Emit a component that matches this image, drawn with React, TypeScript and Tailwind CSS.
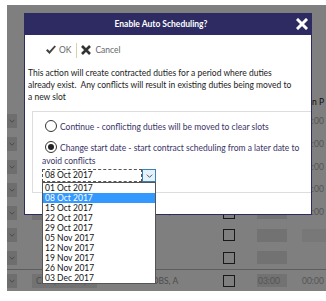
import React from 'react';

const dates = [
  '01 Oct 2017',
  '08 Oct 2017',
  '15 Oct 2017',
  '22 Oct 2017',
  '29 Oct 2017',
  '05 Nov 2017',
  '12 Nov 2017',
  '19 Nov 2017',
  '26 Nov 2017',
  '03 Dec 2017',
];

type Row = { name?: string; who?: string; start?: string; end?: string; endBox?: boolean };

const rows: Row[] = [
  { start: '03:00', end: '00:00' },
  { start: '03:00', end: '00:00' },
  { start: '03:00', end: '00:00' },
  { start: '03:00', end: '00:00' },
  { name: 'CL4 (Bluaner)', who: 'JACOBS, A', start: '03:00', end: '00:00' },
  { endBox: true },
  {},
  { name: 'CL4 (Bluaner)', who: 'JACOBS, A', start: '03:00', end: '00:00' },
];

function Chevron({ className = '' }: { className?: string }) {
  return (
    <svg viewBox="0 0 10 6" className={className} fill="none" stroke="currentColor" strokeWidth="1.2">
      <path d="M1 1l4 4 4-4" />
    </svg>
  );
}

function BackgroundTable() {
  return (
    <div className="flex flex-col h-full bg-white text-[8.5px] text-[#444]">
      <div className="h-[105px] shrink-0 flex items-end justify-end pr-[2px] pb-[1px] text-[#222]">
        <span>Shift Begin P</span>
      </div>
      <div className="flex flex-col">
        {rows.map((r, i) => (
          <div
            key={i}
            className={`h-[22.8px] flex items-center ${i === 6 ? 'border-b border-[#bbb]' : ''}`}
          >
            <div className="w-[10px] h-[14px] bg-[#dcdcdc] flex items-center justify-center text-[#777]">
              <Chevron className="w-[6px] h-[4px]" />
            </div>
            <div className="ml-[15px] w-[65px] h-[14px]">
              {r.name && (
                <div className="h-full bg-[#e4e4e4] flex items-center pl-[4px] text-[#999] whitespace-nowrap overflow-hidden">
                  {r.name}
                </div>
              )}
            </div>
            <div className="ml-[40px] w-[70px] text-[#999] whitespace-nowrap">{r.who}</div>
            <div className="ml-[16px] w-[12px] h-[12px] border border-[#333] bg-white" />
            <div className="ml-[22px] w-[30px] h-[13px] bg-[#e4e4e4] flex items-center pl-[1px] text-[#aaa]">
              {r.start}
            </div>
            <div className="ml-[15px] flex-1 h-[13px] flex items-center text-[#aaa]">
              {r.endBox ? <div className="w-full h-full bg-[#f0f0f0]" /> : r.end}
            </div>
          </div>
        ))}
      </div>
    </div>
  );
}

function Radio({ checked }: { checked?: boolean }) {
  return (
    <span className="w-[12px] h-[12px] shrink-0 rounded-full border border-[#333] bg-white flex items-center justify-center">
      {checked && <span className="w-[6px] h-[6px] rounded-full bg-[#222]" />}
    </span>
  );
}

function Dialog() {
  return (
    <div className="w-[288px] h-[202px] bg-white border border-[#2d2b62] flex flex-col">
      <div className="h-[21px] shrink-0 bg-[#2d2b62] flex items-center relative">
        <div className="flex-1 text-center pr-[14px] text-white font-bold text-[8.5px]">Enable Auto Scheduling?</div>
        <svg viewBox="0 0 12 12" className="absolute right-[3px] top-[4px] w-[12px] h-[12px]" stroke="white" strokeWidth="3" strokeLinecap="square">
          <path d="M2 2l8 8M10 2l-8 8" />
        </svg>
      </div>

      <div className="flex items-center h-[16px] mt-[7px] ml-[20px] text-[8.5px] text-[#666]">
        <svg viewBox="0 0 12 10" className="w-[12px] h-[10px]">
          <path d="M1 5.5l3.5 3.5L11 1.5 9.5 0.5 4.5 6 2.5 4z" fill="#444" />
        </svg>
        <span className="ml-[2px]">OK</span>
        <span className="ml-[5px] w-px h-[15px] bg-[#d6d4a8]" />
        <svg viewBox="0 0 10 10" className="ml-[4px] w-[10px] h-[10px]" stroke="#333" strokeWidth="2.6">
          <path d="M1 1l8 8M9 1l-8 8" />
        </svg>
        <span className="ml-[4px]">Cancel</span>
      </div>

      <p className="mt-[9px] ml-[3px] w-[266px] text-[8.5px] leading-[12px] text-[#222]">
        This action will create contracted duties for a period where duties already exist.&nbsp; Any conflicts will result in existing duties being moved to a new slot
      </p>

      <div className="relative mt-[8px] ml-[7px] h-[82px] border-t border-l border-b border-[#ddd] text-[8.5px] text-[#3a3466]">
        <div className="flex items-center mt-[7px] ml-[12px]">
          <Radio />
          <span className="ml-[3px] mt-[2px]">Continue - conflicting duties will be moved to clear slots</span>
        </div>
        <div className="flex items-start mt-[7px] ml-[12px]">
          <Radio checked />
          <span className="ml-[3px] mt-[1px] leading-[12px]">Change start date - start contract scheduling from a later date to</span>
        </div>
        <div className="ml-[9px] leading-[12px] mt-[1px]">avoid conflicts</div>
        <div className="absolute left-[9px] top-[57px]">
          <div className="flex w-[114px] h-[13px] text-[#111]">
            <div className="flex-1 border border-dashed border-[#555] flex items-center pl-[2px]">08 Oct 2017</div>
            <div className="w-[14px] bg-[#e5f1fb] border border-[#3c7fb1] flex items-center justify-center text-[#333]">
              <Chevron className="w-[7px] h-[4px]" />
            </div>
          </div>
          <div className="w-[114px] border border-[#555] bg-white text-[#111] flex flex-col">
            {dates.map((d, i) => (
              <div
                key={d}
                className={`h-[10px] leading-[10px] pl-[2px] ${i === 1 ? 'bg-[#3399ff] text-white' : ''}`}
              >
                {d}
              </div>
            ))}
          </div>
        </div>
      </div>
    </div>
  );
}

export default function App() {
  return (
    <div className="w-[326px] h-[301px] bg-white overflow-hidden" style={{ fontFamily: 'Lato, "Open Sans", sans-serif' }}>
      <div className="relative ml-[7px] mt-[5px] w-[319px] h-[286px]">
        <BackgroundTable />
        <div className="absolute inset-0 bg-black/50" />
        <div className="absolute left-[17px] top-[8px]">
          <Dialog />
        </div>
      </div>
    </div>
  );
}
